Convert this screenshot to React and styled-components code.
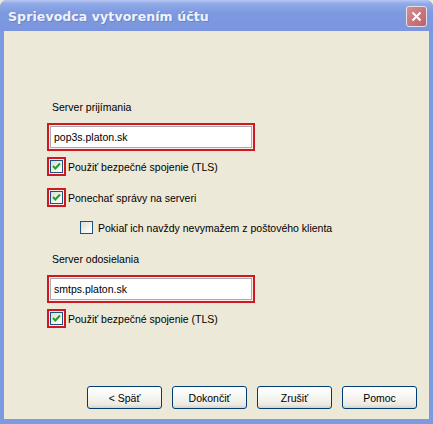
// Account setup wizard dialog (XP inactive window look)
import React from 'react';
import styled, { createGlobalStyle } from 'styled-components';

const GlobalStyle = createGlobalStyle`
  html, body {
    margin: 0;
    padding: 0;
    background: #ece9d8;
  }
`;

const Window = styled.div`
  width: 433px;
  height: 424px;
  display: flex;
  flex-direction: column;
  font-family: "Liberation Sans", sans-serif;
  font-size: 10.5px;
  color: #000;
  box-sizing: border-box;
  background: #7d99df;
  border-radius: 7px 7px 0 0;
  overflow: hidden;
`;

const TitleBar = styled.div`
  height: 30px;
  flex-shrink: 0;
  display: flex;
  align-items: center;
  justify-content: space-between;
  padding: 0 6px 0 8px;
  background: linear-gradient(to bottom, #a9bdf0 0px, #8fa9e8 3px, #7d99df 12px, #7b96de 100%);
  border-top: 1px solid #b3c4f2;
`;

const Title = styled.h1`
  margin: 0;
  font-family: "DejaVu Sans", sans-serif;
  font-weight: bold;
  font-size: 12.5px;
  letter-spacing: 0.1px;
  color: #eef2fc;
  text-shadow: 1px 1px 0 #6a83c6;
`;

const CloseButton = styled.button`
  width: 21px;
  height: 21px;
  padding: 0;
  border: 1px solid #e8dfe6;
  border-radius: 3px;
  background: linear-gradient(135deg, #d48f93 0%, #c4747a 60%, #b5646c 100%);
  display: flex;
  align-items: center;
  justify-content: center;
`;

const Body = styled.div`
  flex: 1;
  margin: 0 4px 5px 4px;
  background: #ece9d8;
  display: flex;
  flex-direction: column;
  padding: 70px 12px 10px 43px;
`;

const SectionLabel = styled.div`
  height: 13px;
  line-height: 13px;
  margin-top: ${p => p.$top}px;
  padding-left: 5px;
`;

const Highlight = styled.div`
  display: inline-flex;
  align-self: flex-start;
  border: 2px solid ${p => (p.$on ? '#d11820' : 'transparent')};
  padding: 1px;
  background: ${p => (p.$on ? '#f6eded' : 'transparent')};
`;

const InputFrame = styled(Highlight)`
  margin-top: 9px;
  width: 208px;
  height: 28px;
  box-sizing: border-box;
`;

const Input = styled.input`
  flex: 1;
  min-width: 0;
  box-sizing: border-box;
  border: 1px solid #a5acb5;
  background: #fff;
  padding: 0 3px;
  font-family: "Liberation Sans", sans-serif;
  font-size: 10.5px;
  color: #000;
  outline: none;
`;

const CheckRow = styled.div`
  display: flex;
  align-items: center;
  gap: 2px;
  margin-top: ${p => p.$top}px;
  margin-left: ${p => p.$indent || 0}px;
  height: 19px;
`;

const Box = styled.span`
  width: 13px;
  height: 13px;
  box-sizing: border-box;
  border: 1px solid #1c5180;
  background: linear-gradient(135deg, #dcdcd5 0%, #f4f4f0 60%, #ffffff 100%);
  display: flex;
  align-items: center;
  justify-content: center;
`;

const CheckLabel = styled.span``;

const Footer = styled.div`
  margin-top: auto;
  display: flex;
  justify-content: flex-end;
  gap: 10px;
`;

const Button = styled.button`
  width: 75px;
  height: 23px;
  border: 1px solid #003c74;
  border-radius: 3px;
  background: linear-gradient(to bottom, #ffffff 0%, #f5f5f1 50%, #ece9e0 85%, #d6d0c5 100%);
  font-family: "Liberation Sans", sans-serif;
  font-size: 10.5px;
  color: #000;
  padding: 0;
`;

function Checkbox({ checked, marked, top, indent, children }) {
  return (
    <CheckRow $top={top} $indent={indent}>
      <Highlight $on={marked}>
        <Box>
          {checked && (
            <svg width="9" height="9" viewBox="0 0 9 9">
              <path d="M1 4 L3.3 6.5 L8 1.5" stroke="#21a121" strokeWidth="2" fill="none" />
            </svg>
          )}
        </Box>
      </Highlight>
      <CheckLabel>{children}</CheckLabel>
    </CheckRow>
  );
}

export default function App() {
  return (
    <>
      <GlobalStyle />
      <Window>
        <TitleBar>
          <Title>Sprievodca vytvorením účtu</Title>
          <CloseButton aria-label="Zavrieť">
            <svg width="11" height="11" viewBox="0 0 11 11">
              <path d="M1.5 1.5 L9.5 9.5 M9.5 1.5 L1.5 9.5" stroke="#fff" strokeWidth="2" />
            </svg>
          </CloseButton>
        </TitleBar>
        <Body>
          <SectionLabel $top={0}>Server prijímania</SectionLabel>
          <InputFrame $on>
            <Input defaultValue="pop3s.platon.sk" />
          </InputFrame>
          <Checkbox checked marked top={6}>Použiť bezpečné spojenie (TLS)</Checkbox>
          <Checkbox checked marked top={12}>Ponechať správy na serveri</Checkbox>
          <Checkbox indent={30} top={11}>Pokiaľ ich navždy nevymažem z poštového klienta</Checkbox>
          <SectionLabel $top={16}>Server odosielania</SectionLabel>
          <InputFrame $on>
            <Input defaultValue="smtps.platon.sk" />
          </InputFrame>
          <Checkbox checked marked top={6}>Použiť bezpečné spojenie (TLS)</Checkbox>
          <Footer>
            <Button>&lt; Späť</Button>
            <Button>Dokončiť</Button>
            <Button>Zrušiť</Button>
            <Button>Pomoc</Button>
          </Footer>
        </Body>
      </Window>
    </>
  );
}
